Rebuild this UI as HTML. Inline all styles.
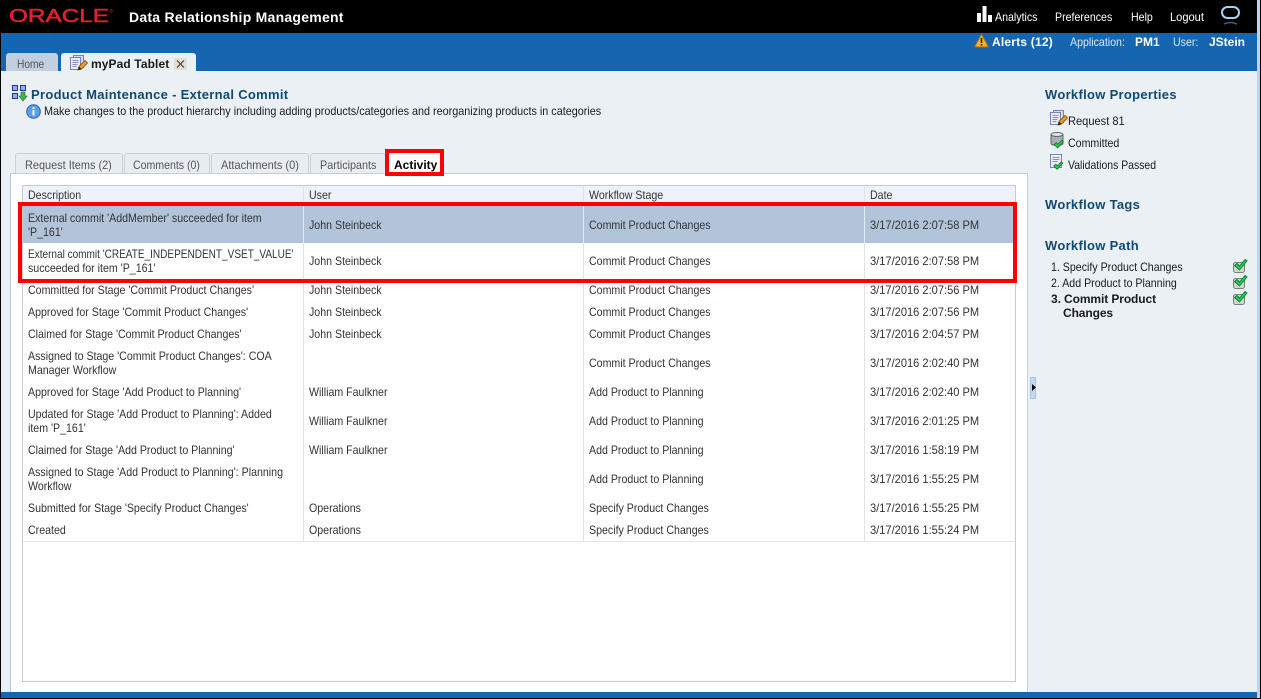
<!DOCTYPE html>
<html><head><meta charset="utf-8"><style>
html,body{margin:0;padding:0;background:#fff}
#p{position:relative;width:1261px;height:699px;overflow:hidden;background:#ebf0f5;font-family:"Liberation Sans",sans-serif;font-size:12px;color:#333}
.b{position:absolute}
.t{position:absolute;white-space:nowrap;line-height:14px;transform:scaleX(.885);transform-origin:0 0}
.d{transform:scaleX(.924)}
.n{transform:none}
.w{color:#fff}.h{font-weight:bold;color:#0f4a73;font-size:13px;letter-spacing:.3px;line-height:16px;transform:none}
.k{color:#1a1a1a}
.tab{position:absolute;top:153px;height:20px;background:#e8edf2;border:1px solid #c8d1da;border-bottom:none;border-radius:3px 3px 0 0;box-sizing:border-box}
svg.i{position:absolute;overflow:visible}
</style></head><body><div id="p">
<svg width="0" height="0" style="position:absolute"><defs>
<g id="doc"><rect x="3.500" y=".5" width="10" height="12" fill="#d5d9f0" stroke="#7c82b8"/><rect x=".5" y="2.500" width="10" height="12" fill="#e9ebf7" stroke="#7c82b8"/><path d="M2.500 5.500h6M2.500 7.500h6M2.500 9.500h5M2.500 11.500h4" stroke="#8a90bc"/></g>
<g id="pen"><path d="M8 15l1-3.500 6-6 2.500 2.500-6 6z" fill="#f0a020" stroke="#7a4a10" stroke-width=".8"/><path d="M8 15l1-3.500 2.500 2.500z" fill="#222"/></g>
<g id="chk"><path d="M1 7l3-2.500 2 2.500 6-6 2 2-8 9z" fill="#2ad04f" stroke="#12702c" stroke-width="1.100"/></g>
<g id="box"><rect x="1.500" y="3.500" width="11" height="10" rx="2" fill="#d4d4d4" stroke="#7d7d7d"/><path d="M2.500 6.500l2.500-2 2.500 2.500 5.500-6.500 2 1.500-7.500 9z" fill="#22cc55" stroke="#0f7a30" stroke-width=".9"/></g>
</defs></svg>

<div class="b" style="left:0;top:0;width:1257px;height:33px;background:#000"></div>
<div class="b" style="left:1px;top:33px;width:1256px;height:38px;background:#1565b1"></div>
<div class="b" style="left:1257px;top:0;width:3px;height:699px;background:#bcd3ea"></div>
<div class="b" style="left:1260px;top:0;width:1px;height:699px;background:#000"></div>
<div class="b" style="left:0;top:0;width:1px;height:699px;background:#000"></div>
<div class="b" style="left:1px;top:692px;width:1256px;height:6px;background:#1565b1"></div>
<div class="b" style="left:0;top:698px;width:1261px;height:1px;background:#000"></div>

<svg class="i" style="left:0;top:0" width="130" height="33"><text x="9" y="22" font-family="Liberation Sans, sans-serif" font-size="18" fill="#e3212b" stroke="#e3212b" stroke-width=".5" textLength="100" lengthAdjust="spacingAndGlyphs">ORACLE</text><text x="109.500" y="13" font-family="Liberation Sans, sans-serif" font-size="5" fill="#e3212b">®</text></svg>
<div class="t w n" style="left:129px;top:9px;font-size:14px;font-weight:bold;line-height:17px;letter-spacing:.25px">Data Relationship Management</div>

<svg class="i" style="left:977px;top:6px" width="15" height="16"><path d="M0 7h4v9H0zM5.500 0h4v16h-4zM11 9h4v7h-4z" fill="#fff"/></svg>
<div class="t w" style="left:995px;top:10px">Analytics</div>
<div class="t w" style="left:1055px;top:10px">Preferences</div>
<div class="t w" style="left:1131px;top:10px">Help</div>
<div class="t w d" style="left:1170px;top:10px">Logout</div>
<svg class="i" style="left:1221px;top:6px" width="20" height="20"><rect x="1" y="1" width="17" height="11" rx="5.500" fill="none" stroke="#a5d3f0" stroke-width="2"/><path d="M3 18q6-3 13 0" fill="none" stroke="#4c5c68" stroke-width="1.500"/></svg>

<svg class="i" style="left:974px;top:33px" width="15" height="15"><path d="M7.500 1L14.500 14H.5z" fill="#f6b52c" stroke="#a8660f"/><path d="M6.700 5h1.600v5H6.700zM6.700 11h1.600v1.600H6.700z" fill="#222"/></svg>
<div class="t w n" style="left:992px;top:35px;font-weight:bold;letter-spacing:.2px">Alerts (12)</div>
<div class="t" style="left:1070px;top:35px;color:#dbe8f5">Application:</div>
<div class="t w n" style="left:1135px;top:35px;font-weight:bold">PM1</div>
<div class="t" style="left:1173px;top:35px;color:#dbe8f5">User:</div>
<div class="t w n" style="left:1209px;top:35px;font-weight:bold">JStein</div>

<div class="b" style="left:6px;top:53px;width:52px;height:18px;background:#c1cfe0;border-radius:3px 3px 0 0"></div>
<div class="t" style="left:17px;top:57px;color:#555;transform:scaleX(.85)">Home</div>
<div class="b" style="left:61px;top:53px;width:135px;height:18px;background:#ebf0f5;border-radius:3px 3px 0 0"></div>
<svg class="i" style="left:70px;top:55px" width="18" height="16"><use href="#doc"/><use href="#pen"/></svg>
<div class="t k n" style="left:91px;top:57px;font-weight:bold;letter-spacing:.1px">myPad Tablet</div>
<div class="b" style="left:174px;top:58px;width:13px;height:12px;background:#e4ddd0;border-radius:2px"></div>
<svg class="i" style="left:176px;top:60px" width="9" height="8"><path d="M1 .5l7 7M8 .5l-7 7" stroke="#333" stroke-width="1"/></svg>

<svg class="i" style="left:12px;top:85px" width="15" height="16"><rect x=".5" y=".5" width="5" height="5" fill="#8fb0ea" stroke="#23359c"/><rect x="8.500" y=".5" width="5" height="5" fill="#8fb0ea" stroke="#23359c"/><rect x=".5" y="8.500" width="5" height="5" fill="#8fb0ea" stroke="#23359c"/><path d="M9 7h4v4h2l-4 5-4-5h2z" fill="#3cb44a" stroke="#1b6b28" stroke-width=".6"/></svg>
<div class="t h" style="left:31px;top:87px">Product Maintenance - External Commit</div>
<svg class="i" style="left:26px;top:104px" width="15" height="15"><circle cx="7.500" cy="7.500" r="6.800" fill="#5d9fe6" stroke="#2a62ad"/><rect x="6.500" y="6" width="2" height="5.500" fill="#fff"/><rect x="6.500" y="3.200" width="2" height="1.800" fill="#fff"/></svg>
<div class="t k" style="left:44px;top:104px;transform:scaleX(.9)">Make changes to the product hierarchy including adding products/categories and reorganizing products in categories</div>

<div class="b" style="left:10px;top:173px;width:1018px;height:519px;background:#fff;border-left:1px solid #b9c6d4;border-right:1px solid #c6d1dc;border-top:1px solid #c3ced9;box-sizing:border-box"></div>
<div class="tab" style="left:15px;width:108px"></div>
<div class="tab" style="left:124px;width:86px"></div>
<div class="tab" style="left:211px;width:98px"></div>
<div class="tab" style="left:310px;width:76px"></div>
<div class="t" style="left:25px;top:158px;color:#555;transform:scaleX(.91)">Request Items (2)</div>
<div class="t" style="left:133px;top:158px;color:#555;transform:scaleX(.88)">Comments (0)</div>
<div class="t" style="left:221px;top:158px;color:#555;transform:scaleX(.92)">Attachments (0)</div>
<div class="t" style="left:320px;top:158px;color:#555;transform:scaleX(.9)">Participants</div>
<div class="b" style="left:385px;top:149px;width:59px;height:27px;border:4px solid #f00;box-sizing:border-box;background:#fff"></div>
<div class="t n" style="left:394px;top:158px;font-weight:bold;color:#000;letter-spacing:0">Activity</div>

<!-- table -->
<div class="b" style="left:22px;top:185px;width:994px;height:497px;border:1px solid #c3ccd5;box-sizing:border-box;background:#fff"></div>
<div class="b" style="left:23px;top:186px;width:992px;height:19px;background:#eff2fa;border-bottom:1px solid #d7dde6"></div>
<div class="b" style="left:23px;top:206px;width:992px;height:37px;background:#b2c4da"></div>
<div class="b" style="left:23px;top:541px;width:992px;height:1px;background:#e3e7ec"></div>
<div class="b" style="left:303px;top:186px;width:1px;height:355px;background:#dfe4ea"></div>
<div class="b" style="left:583px;top:186px;width:1px;height:355px;background:#dfe4ea"></div>
<div class="b" style="left:864px;top:186px;width:1px;height:355px;background:#dfe4ea"></div>
<div class="b" style="left:303px;top:206px;width:1px;height:37px;background:#e6ecf3"></div>
<div class="b" style="left:583px;top:206px;width:1px;height:37px;background:#e6ecf3"></div>
<div class="b" style="left:864px;top:206px;width:1px;height:37px;background:#e6ecf3"></div>

<div class="t" style="left:28px;top:188px">Description</div>
<div class="t" style="left:309px;top:188px">User</div>
<div class="t" style="left:589px;top:188px">Workflow Stage</div>
<div class="t" style="left:870px;top:188px">Date</div>

<div class="t" style="left:28px;top:211px">External commit 'AddMember' succeeded for item</div>
<div class="t" style="left:28px;top:225px">'P_161'</div>
<div class="t" style="left:309px;top:218px">John Steinbeck</div><div class="t" style="left:589px;top:218px">Commit Product Changes</div><div class="t d" style="left:870px;top:218px">3/17/2016 2:07:58 PM</div>

<div class="t" style="left:28px;top:247px;transform:scaleX(.836)">External commit 'CREATE_INDEPENDENT_VSET_VALUE'</div>
<div class="t" style="left:28px;top:261px">succeeded for item 'P_161'</div>
<div class="t" style="left:309px;top:254px">John Steinbeck</div><div class="t" style="left:589px;top:254px">Commit Product Changes</div><div class="t d" style="left:870px;top:254px">3/17/2016 2:07:58 PM</div>

<div class="t" style="left:28px;top:283px">Committed for Stage 'Commit Product Changes'</div>
<div class="t" style="left:309px;top:283px">John Steinbeck</div><div class="t" style="left:589px;top:283px">Commit Product Changes</div><div class="t d" style="left:870px;top:283px">3/17/2016 2:07:56 PM</div>

<div class="t" style="left:28px;top:305px">Approved for Stage 'Commit Product Changes'</div>
<div class="t" style="left:309px;top:305px">John Steinbeck</div><div class="t" style="left:589px;top:305px">Commit Product Changes</div><div class="t d" style="left:870px;top:305px">3/17/2016 2:07:56 PM</div>

<div class="t" style="left:28px;top:327px">Claimed for Stage 'Commit Product Changes'</div>
<div class="t" style="left:309px;top:327px">John Steinbeck</div><div class="t" style="left:589px;top:327px">Commit Product Changes</div><div class="t d" style="left:870px;top:327px">3/17/2016 2:04:57 PM</div>

<div class="t" style="left:28px;top:349px">Assigned to Stage 'Commit Product Changes': COA</div>
<div class="t" style="left:28px;top:363px">Manager Workflow</div>
<div class="t" style="left:589px;top:356px">Commit Product Changes</div><div class="t d" style="left:870px;top:356px">3/17/2016 2:02:40 PM</div>

<div class="t" style="left:28px;top:385px">Approved for Stage 'Add Product to Planning'</div>
<div class="t" style="left:309px;top:385px">William Faulkner</div><div class="t" style="left:589px;top:385px">Add Product to Planning</div><div class="t d" style="left:870px;top:385px">3/17/2016 2:02:40 PM</div>

<div class="t" style="left:28px;top:407px">Updated for Stage 'Add Product to Planning': Added</div>
<div class="t" style="left:28px;top:421px">item 'P_161'</div>
<div class="t" style="left:309px;top:414px">William Faulkner</div><div class="t" style="left:589px;top:414px">Add Product to Planning</div><div class="t d" style="left:870px;top:414px">3/17/2016 2:01:25 PM</div>

<div class="t" style="left:28px;top:443px">Claimed for Stage 'Add Product to Planning'</div>
<div class="t" style="left:309px;top:443px">William Faulkner</div><div class="t" style="left:589px;top:443px">Add Product to Planning</div><div class="t d" style="left:870px;top:443px">3/17/2016 1:58:19 PM</div>

<div class="t" style="left:28px;top:465px">Assigned to Stage 'Add Product to Planning': Planning</div>
<div class="t" style="left:28px;top:479px">Workflow</div>
<div class="t" style="left:589px;top:472px">Add Product to Planning</div><div class="t d" style="left:870px;top:472px">3/17/2016 1:55:25 PM</div>

<div class="t" style="left:28px;top:501px">Submitted for Stage 'Specify Product Changes'</div>
<div class="t" style="left:309px;top:501px">Operations</div><div class="t" style="left:589px;top:501px">Specify Product Changes</div><div class="t d" style="left:870px;top:501px">3/17/2016 1:55:25 PM</div>

<div class="t" style="left:28px;top:523px">Created</div>
<div class="t" style="left:309px;top:523px">Operations</div><div class="t" style="left:589px;top:523px">Specify Product Changes</div><div class="t d" style="left:870px;top:523px">3/17/2016 1:55:24 PM</div>

<div class="b" style="left:18px;top:202px;width:999px;height:81px;border:4px solid #f00;box-sizing:border-box"></div>

<!-- right -->
<div class="t h" style="left:1045px;top:87px">Workflow Properties</div>
<svg class="i" style="left:1050px;top:110px" width="18" height="16"><use href="#doc"/><use href="#pen"/></svg>
<div class="t k d" style="left:1068px;top:114px">Request 81</div>
<svg class="i" style="left:1050px;top:132px" width="18" height="16"><ellipse cx="7" cy="2.500" rx="6" ry="2" fill="#e4e6ee" stroke="#666"/><path d="M1 2.500v9c0 1 2.500 2 6 2s6-1 6-2v-9c0 1-2.500 2-6 2s-6-1-6-2z" fill="#a9aebd" stroke="#666"/><g transform="translate(3.500 7.500) scale(.7)"><use href="#chk"/></g></svg>
<div class="t k" style="left:1068px;top:136px">Committed</div>
<svg class="i" style="left:1050px;top:154px" width="18" height="16"><rect x=".5" y=".5" width="11" height="13" fill="#e9ebf7" stroke="#7c82b8"/><path d="M2.500 3.500h7M2.500 5.500h7M2.500 7.500h5" stroke="#8a90bc"/><g transform="translate(3 7) scale(.7)"><use href="#chk"/></g></svg>
<div class="t k" style="left:1068px;top:158px;transform:scaleX(.87)">Validations Passed</div>

<div class="t h" style="left:1045px;top:197px">Workflow Tags</div>
<div class="t h" style="left:1045px;top:238px">Workflow Path</div>

<div class="t k" style="left:1051px;top:260px">1. Specify Product Changes</div>
<div class="t k" style="left:1051px;top:276px">2. Add Product to Planning</div>
<div class="t k n" style="left:1051px;top:292px;font-weight:bold;letter-spacing:-.1px">3. Commit Product</div>
<div class="t k n" style="left:1063px;top:306px;font-weight:bold;letter-spacing:-.1px">Changes</div>
<svg class="i" style="left:1232px;top:259px" width="16" height="14"><use href="#box"/></svg>
<svg class="i" style="left:1232px;top:275px" width="16" height="14"><use href="#box"/></svg>
<svg class="i" style="left:1232px;top:291px" width="16" height="14"><use href="#box"/></svg>

<div class="b" style="left:1030px;top:377px;width:6px;height:22px;background:#c5daf0;border:1px solid #a9c4e2;box-sizing:border-box"></div>
<svg class="i" style="left:1032px;top:384px" width="4" height="7"><path d="M0 0l4 3.500L0 7z" fill="#000"/></svg>
</div></body></html>
